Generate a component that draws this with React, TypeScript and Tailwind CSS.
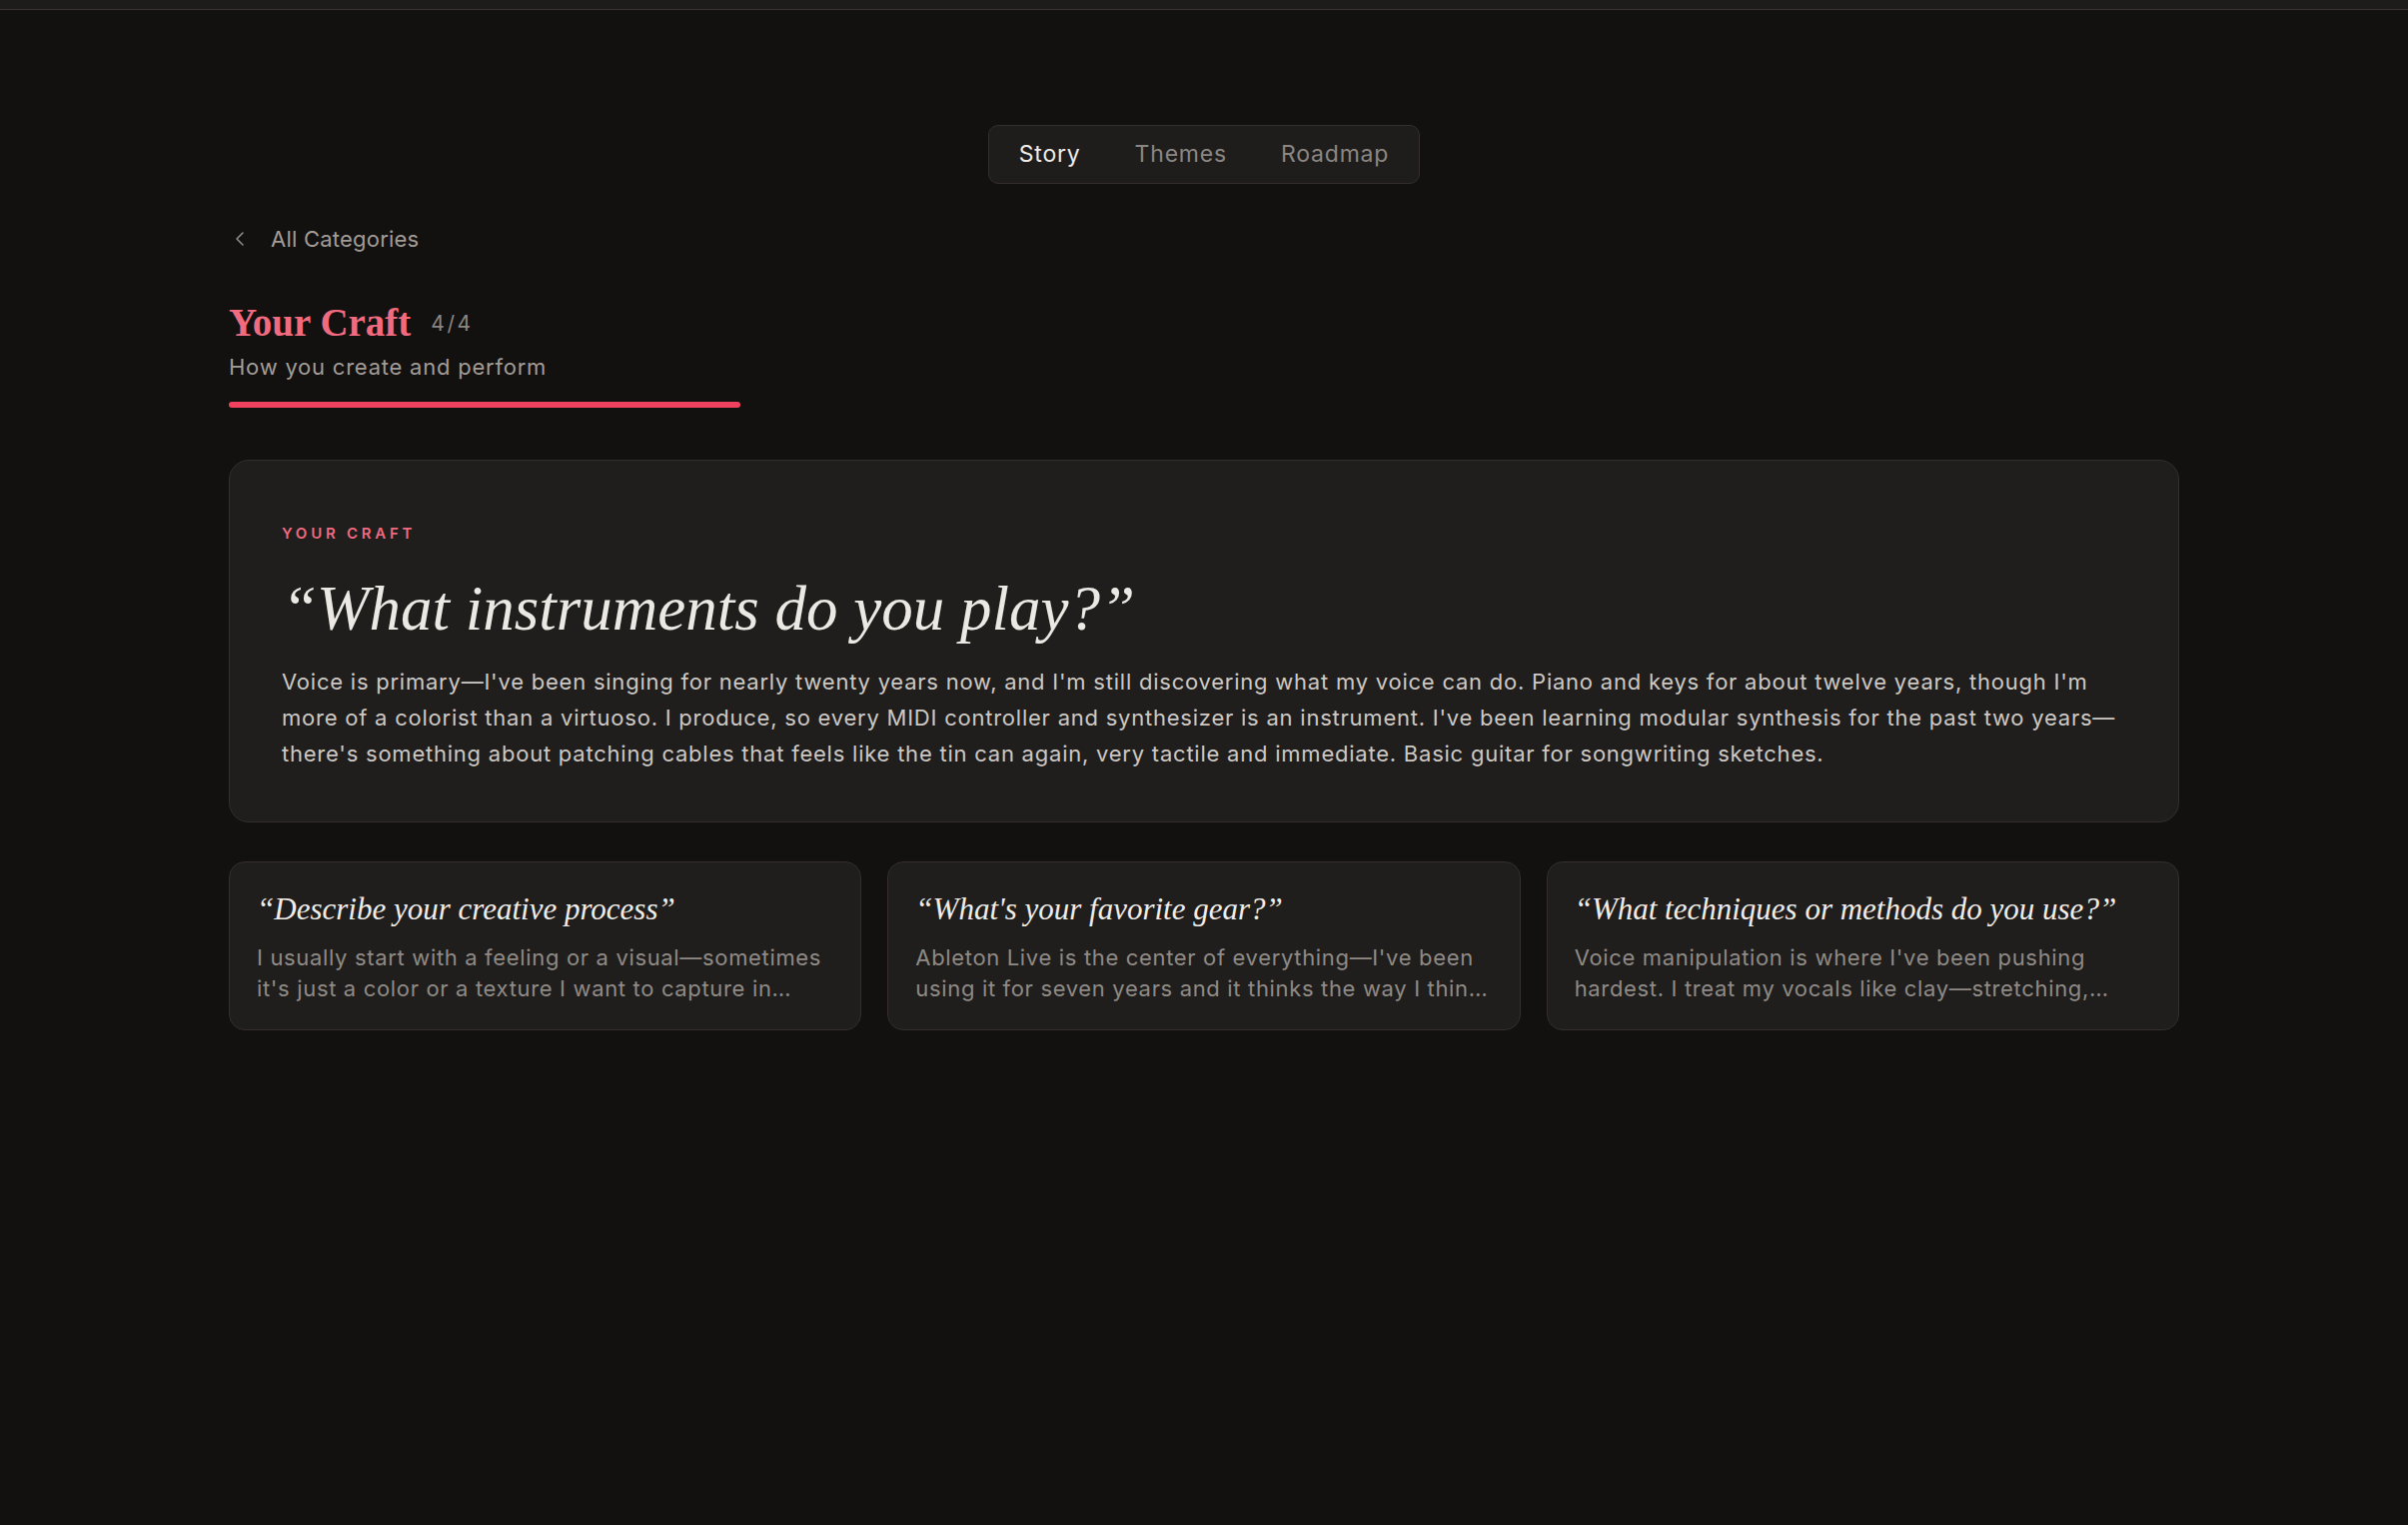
import React, { useState } from "react";
import { ChevronLeft } from "lucide-react";

const tabs = ["Story", "Themes", "Roadmap"];

// previews are cut down to two lines
const related = [
  {
    q: "Describe your creative process",
    a: "I usually start with a feeling or a visual—sometimes it's just a color or a texture I want to capture in…",
  },
  {
    q: "What's your favorite gear?",
    a: "Ableton Live is the center of everything—I've been using it for seven years and it thinks the way I thin…",
  },
  {
    q: "What techniques or methods do you use?",
    a: "Voice manipulation is where I've been pushing hardest. I treat my vocals like clay—stretching,…",
  },
];

const sans = "font-['Inter','Noto_Sans',sans-serif]";
const serif = "font-['Liberation_Serif','Times_New_Roman',serif]";

export default function App() {
  const [active, setActive] = useState("Story");

  return (
    <div className={`min-h-screen bg-[#121110] ${sans}`}>
      {/* top strip */}
      <div className="h-[10px] bg-[#1d1c1b] border-b border-[#3b3032]"></div>

      <div className="flex justify-center mt-[115px]">
        <div className="flex items-center h-[59px] px-[3px] rounded-[10px] bg-[#1e1d1c] border border-[#362d2f]">
          {tabs.map((t) => (
            <button
              key={t}
              onClick={() => setActive(t)}
              className={`h-full px-[27px] text-[23px] tracking-[0.035em] leading-none ${
                active === t ? "text-[#efebe7]" : "text-[#8b8681]"
              }`}
            >
              {t}
            </button>
          ))}
        </div>
      </div>

      <main className="w-[1952px] mx-auto">
        <a className="mt-[40px] h-[30px] flex items-center gap-[19px] text-[22px] tracking-[0.01em] text-[#a29c97]">
          <ChevronLeft size={24} strokeWidth={1.6} className="text-[#8f8a85] -ml-[1px]" />
          All Categories
        </a>

        <div className="mt-[44px] flex items-center gap-[20px]">
          <h1 className={`${serif} font-bold text-[39px] leading-[49px] text-[#f06a80]`}>
            Your Craft
          </h1>
          <span className="text-[21px] tracking-[0.12em] text-[#8b8681] pt-[2px]">4/4</span>
        </div>
        <p className="mt-[5px] text-[22px] leading-[30px] tracking-[0.035em] text-[#a29c97]">
          How you create and perform
        </p>
        <div className="mt-[20px] w-[512px] h-[6px] rounded-full bg-[#f0425f]"></div>

        {/* current question */}
        <section className="mt-[52px] rounded-[20px] bg-[#1f1e1d] border border-[#352d2e] px-[52px] pt-[62px] pb-[50px]">
          <div className="text-[15px] leading-[22px] font-semibold tracking-[0.25em] text-[#f06a80]">
            YOUR CRAFT
          </div>
          <h2 className={`${serif} italic mt-[28px] text-[63px] leading-[72px] text-[#ece8e3]`}>
            “What instruments do you play?”
          </h2>
          <p className="mt-[19px] text-[22px] leading-[36px] tracking-[0.035em] text-[#cdc8c3]">
            Voice is primary—I've been singing for nearly twenty years now, and I'm still discovering
            what my voice can do. Piano and keys for about twelve years, though I'm more of a
            colorist than a virtuoso. I produce, so every MIDI controller and synthesizer is an
            instrument. I've been learning modular synthesis for the past two years—there's
            something about patching cables that feels like the tin can again, very tactile and
            immediate. Basic guitar for songwriting sketches.
          </p>
        </section>

        <div className="mt-[39px] grid grid-cols-3 gap-[26px]">
          {related.map((r) => (
            <div
              key={r.q}
              className="rounded-[16px] bg-[#1f1e1d] border border-[#352d2e] px-[27px] pt-[27px] pb-[25px]"
            >
              <h3 className={`${serif} italic text-[31px] leading-[39px] text-[#f0ece8]`}>
                “{r.q}”
              </h3>
              <p className="mt-[14px] text-[22px] leading-[31px] tracking-[0.03em] text-[#8f8a85] line-clamp-2">
                {r.a}
              </p>
            </div>
          ))}
        </div>
      </main>
    </div>
  );
}
